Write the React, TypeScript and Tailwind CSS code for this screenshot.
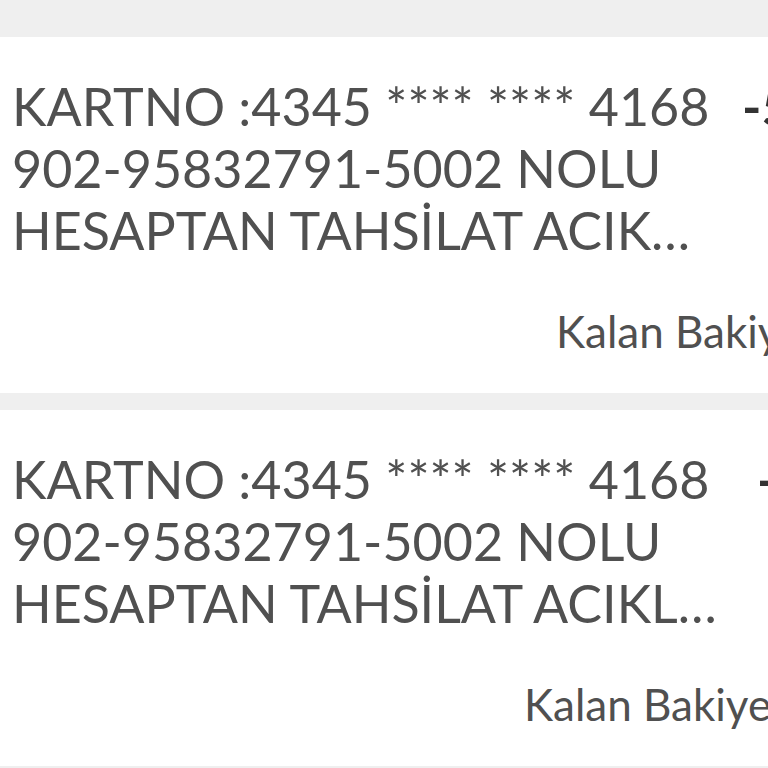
import React from "react";

type Row = {
  lines: string[];
  amount: string;
  textWidth: string;
  amountPad: string;
  balancePad: string;
};

const ROWS: Row[] = [
  {
    lines: [
      "KARTNO :4345 **** **** 4168",
      "902-95832791-5002 NOLU",
      "HESAPTAN TAHSİLAT ACIKLAMA: KREDİ KARTI ÖDEMESİ",
    ],
    amount: "-5.000,00 TL",
    textWidth: "w-[704px]",
    amountPad: "pl-[26px]",
    balancePad: "pl-[556px]",
  },
  {
    lines: [
      "KARTNO :4345 **** **** 4168",
      "902-95832791-5002 NOLU",
      "HESAPTAN TAHSİLAT ACIKLAMA: KREDİ KARTI ÖDEMESİ",
    ],
    amount: "-500,00 TL",
    textWidth: "w-[734px]",
    amountPad: "pl-[11px]",
    balancePad: "pl-[524px]",
  },
];

function TransactionCard({ row }: { row: Row }) {
  return (
    <div className="bg-white h-[356px] pt-[38px] overflow-hidden">
      <div className="flex w-[1200px] pl-[12px]">
        <div
          className={`${row.textWidth} shrink-0 text-[52px] leading-[62px] text-[#505050] font-normal`}
        >
          {row.lines.map((line, i) => (
            <p key={i} className="truncate">
              {line}
            </p>
          ))}
        </div>
        <span
          className={`${row.amountPad} shrink-0 text-[52px] leading-[62px] text-[#333] font-bold whitespace-nowrap`}
        >
          {row.amount}
        </span>
      </div>
      <div
        className={`${row.balancePad} mt-[44px] w-[1200px] text-[44px] leading-[52px] text-[#505050] font-normal whitespace-nowrap`}
      >
        Kalan Bakiye : 12.345,67 TL
      </div>
    </div>
  );
}

export default function App() {
  return (
    <div
      className="w-[768px] h-[768px] overflow-hidden bg-[#efefef] pt-[37px] flex flex-col gap-[17px]"
      style={{ fontFamily: "Lato, 'Noto Sans', sans-serif" }}
    >
      {ROWS.map((row, i) => (
        <TransactionCard key={i} row={row} />
      ))}
    </div>
  );
}
